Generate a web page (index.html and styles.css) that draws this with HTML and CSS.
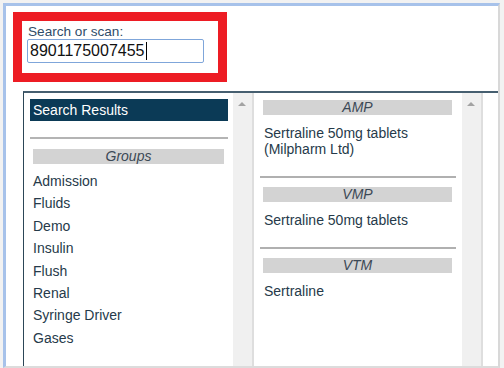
FILE: index.html
```html
<!DOCTYPE html>
<html lang="en">
<head>
    <meta charset="UTF-8">
    <meta name="viewport" content="width=device-width, initial-scale=1.0">
    <title>Search or scan</title>
    <link rel="stylesheet" href="styles.css">
</head>
<body>
    <div class="window">
        <div class="search-box">
            <label class="search-label" for="scan">Search or scan:</label>
            <div class="search-input" id="scan">8901175007455<span class="caret"></span></div>
        </div>

        <div class="panel">
            <div class="column">
                <div class="column-body left-body">
                    <div class="results-title">Search Results</div>
                    <div class="rule"></div>
                    <div class="group-head">Groups</div>
                    <ul class="group-list">
                        <li>Admission</li>
                        <li>Fluids</li>
                        <li>Demo</li>
                        <li>Insulin</li>
                        <li>Flush</li>
                        <li>Renal</li>
                        <li>Syringe Driver</li>
                        <li>Gases</li>
                    </ul>
                </div>
                <div class="scrollbar"><span class="arrow-up"></span></div>
            </div>

            <div class="column">
                <div class="column-body right-body">
                    <div class="section">
                        <div class="section-head">AMP</div>
                        <div class="section-text">Sertraline 50mg tablets<br>(Milpharm Ltd)</div>
                    </div>
                    <div class="section-rule"></div>
                    <div class="section">
                        <div class="section-head">VMP</div>
                        <div class="section-text">Sertraline 50mg tablets</div>
                    </div>
                    <div class="section-rule"></div>
                    <div class="section">
                        <div class="section-head">VTM</div>
                        <div class="section-text">Sertraline</div>
                    </div>
                </div>
                <div class="scrollbar"><span class="arrow-up"></span></div>
            </div>
        </div>
    </div>
</body>
</html>
```

FILE: styles.css
```css
body {
    margin: 0;
    background: #f2f2f2;
    font-family: "Liberation Sans", Arial, sans-serif;
    font-size: 14px;
    color: #263a4a;
}

.window {
    margin: 3px 4px 0 3px;
    height: 360px;
    background: #fff;
    border-top: 3px solid #a7c2ea;
    border-left: 3px solid #a7c2ea;
    border-right: 2px solid #d8d8d8;
    border-bottom: 2px solid #dcdcdc;
    overflow: hidden;
}

.search-box {
    margin: 6px 0 0 7px;
    width: 191px;
    height: 52px;
    border: 9px solid #ed1c24;
    padding: 0 0 0 5px;
    box-sizing: content-box;
}

.search-label {
    display: block;
    margin: 3px 0 0 1px;
    font-size: 13.6px;
    line-height: 15px;
    color: #2f4c68;
}

.search-input {
    width: 173px;
    height: 22px;
    margin-top: 0;
    border: 1px solid #7fa6da;
    border-radius: 2px;
    padding: 0 0 0 2px;
    font-size: 16px;
    line-height: 22px;
    color: #111;
}

.caret {
    display: inline-block;
    width: 1px;
    height: 18px;
    margin-left: 1px;
    background: #000;
    vertical-align: -4px;
}

.panel {
    display: flex;
    margin: 9px 0 0 17px;
    height: 300px;
    border-top: 2px solid #465f70;
    border-left: 1px solid #2c4657;
}

.column {
    display: flex;
}

.column-body {
    box-sizing: border-box;
}

.left-body {
    width: 209px;
    padding: 6px 5px 0 6px;
}

.right-body {
    width: 208px;
    padding: 7px 0 0 0;
}

.scrollbar {
    position: relative;
    width: 19px;
    background: #f0f0f0;
    border-right: 2px solid #dedede;
}

.arrow-up {
    position: absolute;
    left: 5px;
    top: 9px;
    border-left: 4px solid transparent;
    border-right: 4px solid transparent;
    border-bottom: 4px solid #a3a3a3;
}

.results-title {
    height: 22px;
    line-height: 22px;
    padding-left: 3px;
    background: #0b3a56;
    color: #fff;
}

.rule {
    height: 2px;
    margin-top: 16px;
    background: #b4b4b4;
}

.group-head {
    margin: 10px 4px 0 3px;
    height: 15px;
    line-height: 15px;
    background: #d3d3d3;
    color: #3c4956;
    font-style: italic;
    text-align: center;
}

.group-list {
    list-style: none;
    margin: 6px 0 0;
    padding: 0 0 0 3px;
}

.group-list li {
    height: 22.4px;
    line-height: 22.4px;
}

.section-head {
    margin: 0 10px 0 9px;
    height: 15px;
    line-height: 15px;
    background: #d3d3d3;
    color: #3c4956;
    font-style: italic;
    text-align: center;
}

.section-text {
    margin-top: 10px;
    padding: 0 0 19px 10px;
    line-height: 16px;
}

.section-rule {
    height: 2px;
    margin: 0 6px 9px;
    background: #b0b0b0;
}
```
